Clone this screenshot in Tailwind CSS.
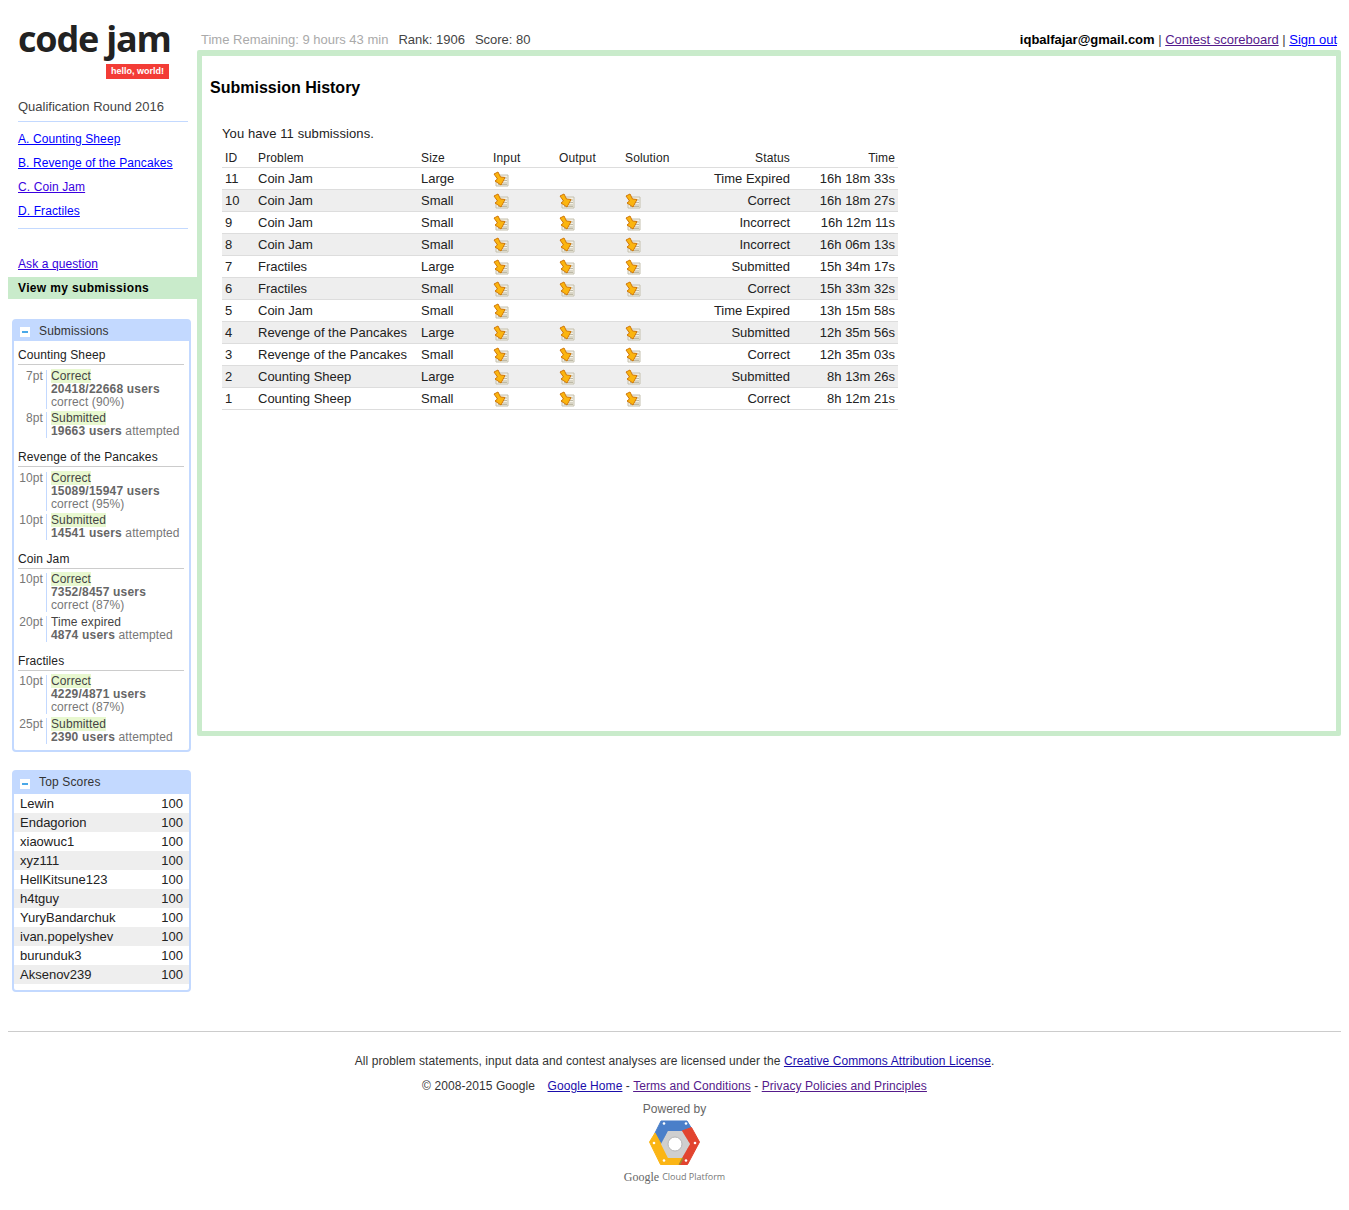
<!DOCTYPE html>
<html lang="en">
<head>
    <meta charset="UTF-8">
    <title>Code Jam - Submission History</title>
    <script src="https://cdn.jsdelivr.net/npm/@tailwindcss/browser@4"></script>
</head>
<body class="bg-white text-black font-['Liberation_Sans',Arial,sans-serif]">
    <svg class="hidden">
        <symbol id="dl" viewBox="0 0 16 16">
            <path d="M7 4h8v11H3V10z" fill="#f4f1e6" stroke="#c4c0ae" stroke-width="1"/>
            <path d="M9 7h5M10 9.500h4M10 12h4M5 13.500h9" stroke="#bdb9a6" stroke-width="1"/>
            <path d="M1 3l4-2 2.500 5 4.500.5-4 7.500-6-4 2.500-2z" fill="#fbb50f" stroke="#d0780a" stroke-width="1" stroke-linejoin="round"/>
        </symbol>
    </svg>

    <div class="flex px-2 h-[1031px]">
        <!-- Sidebar -->
        <div class="w-[189px] shrink-0">
            <div class="pl-[10px] pr-[9px]">
                <div class="h-[64px] pt-[16px] font-['Open_Sans',sans-serif] font-bold text-[36px] leading-[46px] text-[#222] whitespace-nowrap tracking-[-1.2px]">code jam</div>
                <div class="flex justify-end pr-[19px]"><span class="bg-[#f33c36] text-white text-[9px] font-bold h-[15px] leading-[15px] w-[63px] text-center">hello, world!</span></div>
                <div class="mt-[20px] text-[13px] leading-[16px] text-[#444] pb-[6px] border-b border-[#c3d9ff]">Qualification Round 2016</div>
                <div class="pt-[5px] pb-[5px] border-b border-[#c3d9ff] text-[12px] leading-[24px] tracking-[0.1px]">
                    <div><a href="#" class="underline text-[#00f]">A. Counting Sheep</a></div>
                    <div><a href="#" class="underline text-[#00f]">B. Revenge of the Pancakes</a></div>
                    <div><a href="#" class="underline text-[#3a00e0]">C. Coin Jam</a></div>
                    <div><a href="#" class="underline text-[#00f]">D. Fractiles</a></div>
                </div>
                <div class="mt-[26px] text-[12px] leading-[18px] tracking-[0.1px]"><a href="#" class="underline text-[#3300dd]">Ask a question</a></div>
            </div>
            <div class="mt-[4px] h-[22px] bg-[#c9ebcb] pl-[10px] text-[12px] leading-[22px] font-bold tracking-[0.35px]">View my submissions</div>

            <!-- Submissions box -->
            <div class="mt-[20px] ml-[4px] w-[179px] h-[433px] border-2 border-[#c3d9ff] rounded-[4px]">
                <div class="h-[21px] -mt-px bg-[#c3d9ff] flex items-center pl-[6px] text-[12px] text-[#333] tracking-[0.15px]">
                    <span class="w-[10px] h-[10px] mt-[3px] bg-white flex items-center justify-center"><span class="w-[6px] h-[2px] bg-[#4aa8e8]"></span></span>
                    <span class="ml-[9px]">Submissions</span>
                </div>
                <div class="px-[4px] pt-[2px] text-[12px] leading-[13px] text-[#777] tracking-[0.1px]">
                    <div class="h-[102px] w-[166px]">
                        <div class="h-[22px] pt-[5px] leading-[14px] text-[#222] border-b border-[#ccc]">Counting Sheep</div>
                        <div class="flex mt-[5px]">
                            <div class="w-[29px] pr-[3px] text-right border-r border-[#c3d9ff]">7pt</div>
                            <div class="pl-[4px]"><span class="bg-[#e8f8d0] text-[#444]">Correct</span><br><b class="text-[#666] tracking-[0.2px]">20418/22668 users</b><br>correct (90%)</div>
                        </div>
                        <div class="flex mt-[3px]">
                            <div class="w-[29px] pr-[3px] text-right border-r border-[#c3d9ff]">8pt</div>
                            <div class="pl-[4px] whitespace-nowrap"><span class="bg-[#e8f8d0] text-[#444]">Submitted</span><br><b class="text-[#666] tracking-[0.2px]">19663 users</b> attempted</div>
                        </div>
                    </div>
                    <div class="h-[102px] w-[166px]">
                        <div class="h-[22px] pt-[5px] leading-[14px] text-[#222] border-b border-[#ccc]">Revenge of the Pancakes</div>
                        <div class="flex mt-[5px]">
                            <div class="w-[29px] pr-[3px] text-right border-r border-[#c3d9ff]">10pt</div>
                            <div class="pl-[4px]"><span class="bg-[#e8f8d0] text-[#444]">Correct</span><br><b class="text-[#666] tracking-[0.2px]">15089/15947 users</b><br>correct (95%)</div>
                        </div>
                        <div class="flex mt-[3px]">
                            <div class="w-[29px] pr-[3px] text-right border-r border-[#c3d9ff]">10pt</div>
                            <div class="pl-[4px] whitespace-nowrap"><span class="bg-[#e8f8d0] text-[#444]">Submitted</span><br><b class="text-[#666] tracking-[0.2px]">14541 users</b> attempted</div>
                        </div>
                    </div>
                    <div class="h-[102px] w-[166px]">
                        <div class="h-[22px] pt-[5px] leading-[14px] text-[#222] border-b border-[#ccc]">Coin Jam</div>
                        <div class="flex mt-[4px]">
                            <div class="w-[29px] pr-[3px] text-right border-r border-[#c3d9ff]">10pt</div>
                            <div class="pl-[4px]"><span class="bg-[#e8f8d0] text-[#444]">Correct</span><br><b class="text-[#666] tracking-[0.2px]">7352/8457 users</b><br>correct (87%)</div>
                        </div>
                        <div class="flex mt-[4px]">
                            <div class="w-[29px] pr-[3px] text-right border-r border-[#c3d9ff]">20pt</div>
                            <div class="pl-[4px] whitespace-nowrap"><span class="text-[#444]">Time expired</span><br><b class="text-[#666] tracking-[0.2px]">4874 users</b> attempted</div>
                        </div>
                    </div>
                    <div class="w-[166px]">
                        <div class="h-[22px] pt-[5px] leading-[14px] text-[#222] border-b border-[#ccc]">Fractiles</div>
                        <div class="flex mt-[4px]">
                            <div class="w-[29px] pr-[3px] text-right border-r border-[#c3d9ff]">10pt</div>
                            <div class="pl-[4px]"><span class="bg-[#e8f8d0] text-[#444]">Correct</span><br><b class="text-[#666] tracking-[0.2px]">4229/4871 users</b><br>correct (87%)</div>
                        </div>
                        <div class="flex mt-[4px]">
                            <div class="w-[29px] pr-[3px] text-right border-r border-[#c3d9ff]">25pt</div>
                            <div class="pl-[4px] whitespace-nowrap"><span class="bg-[#e8f8d0] text-[#444]">Submitted</span><br><b class="text-[#666] tracking-[0.2px]">2390 users</b> attempted</div>
                        </div>
                    </div>
                </div>
            </div>

            <!-- Top scores box -->
            <div class="mt-[18px] ml-[4px] w-[179px] h-[222px] border-2 border-[#c3d9ff] rounded-[4px]">
                <div class="h-[23px] pb-[2px] -mt-px bg-[#c3d9ff] flex items-center pl-[6px] text-[12px] text-[#333] tracking-[0.15px]">
                    <span class="w-[10px] h-[10px] mt-[4px] bg-white flex items-center justify-center"><span class="w-[6px] h-[2px] bg-[#4aa8e8]"></span></span>
                    <span class="ml-[9px]">Top Scores</span>
                </div>
                <div class="text-[13px] leading-[19px] text-[#222]">
                    <div class="flex justify-between pl-[6px] pr-[6px]"><span>Lewin</span><span>100</span></div>
                    <div class="flex justify-between pl-[6px] pr-[6px] bg-[#eee]"><span>Endagorion</span><span>100</span></div>
                    <div class="flex justify-between pl-[6px] pr-[6px]"><span>xiaowuc1</span><span>100</span></div>
                    <div class="flex justify-between pl-[6px] pr-[6px] bg-[#eee]"><span>xyz111</span><span>100</span></div>
                    <div class="flex justify-between pl-[6px] pr-[6px]"><span>HellKitsune123</span><span>100</span></div>
                    <div class="flex justify-between pl-[6px] pr-[6px] bg-[#eee]"><span>h4tguy</span><span>100</span></div>
                    <div class="flex justify-between pl-[6px] pr-[6px]"><span>YuryBandarchuk</span><span>100</span></div>
                    <div class="flex justify-between pl-[6px] pr-[6px] bg-[#eee]"><span>ivan.popelyshev</span><span>100</span></div>
                    <div class="flex justify-between pl-[6px] pr-[6px]"><span>burunduk3</span><span>100</span></div>
                    <div class="flex justify-between pl-[6px] pr-[6px] bg-[#eee]"><span>Aksenov239</span><span>100</span></div>
                </div>
            </div>
        </div>

        <!-- Main column -->
        <div class="flex-1 min-w-0">
            <div class="h-[50px] flex items-end justify-between pl-[4px] pr-[4px] pb-[2px] text-[13px] leading-[16px]">
                <div class="flex text-[#444]">
                    <span class="text-[#aaa]">Time Remaining: 9 hours 43 min</span>
                    <span class="ml-[10px]">Rank: 1906</span>
                    <span class="ml-[10px]">Score: 80</span>
                </div>
                <div class="text-[#444]"><b class="text-black">iqbalfajar@gmail.com</b> | <a href="#" class="underline text-[#551a8b]">Contest scoreboard</a> | <a href="#" class="underline text-[#00f]">Sign out</a></div>
            </div>
            <div class="h-[686px] border-[5px] border-t-[6px] border-[#c9ebcb] rounded-[2px] pl-[8px]">
                <h1 class="mt-[22px] text-[16px] leading-[20px] font-bold">Submission History</h1>
                <div class="ml-[12px] mt-[28px] w-[676px]">
                    <p class="text-[13px] leading-[16px] text-[#222] tracking-[0.1px]">You have 11 submissions.</p>
                    <table class="mt-[3px] w-[676px] table-fixed border-collapse text-[13px] text-[#222]">
                        <colgroup>
                            <col class="w-[33px]"><col class="w-[163px]"><col class="w-[72px]"><col class="w-[66px]"><col class="w-[66px]"><col class="w-[66px]"><col class="w-[105px]"><col class="w-[105px]">
                        </colgroup>
                        <thead class="text-[12px] tracking-[0.15px]">
                            <tr class="h-[22px] border-b border-[#ddd]">
                                <th class="px-[3px] pt-[4px] pb-0 text-left font-normal">ID</th><th class="px-[3px] pt-[4px] pb-0 text-left font-normal">Problem</th><th class="px-[3px] pt-[4px] pb-0 text-left font-normal">Size</th><th class="px-[3px] pt-[4px] pb-0 text-left font-normal">Input</th><th class="px-[3px] pt-[4px] pb-0 text-left font-normal">Output</th><th class="px-[3px] pt-[4px] pb-0 text-left font-normal">Solution</th><th class="px-[3px] pt-[4px] pb-0 text-right font-normal">Status</th><th class="px-[3px] pt-[4px] pb-0 text-right font-normal">Time</th>
                            </tr>
                        </thead>
                        <tbody>
                            <tr class="h-[22px] border-b border-[#ddd]"><td class="px-[3px]">11</td><td class="px-[3px]">Coin Jam</td><td class="px-[3px]">Large</td><td class="px-[3px]"><svg class="w-4 h-4"><use href="#dl"/></svg></td><td class="px-[3px]"></td><td class="px-[3px]"></td><td class="px-[3px] text-right">Time Expired</td><td class="px-[3px] text-right">16h 18m 33s</td></tr>
                            <tr class="h-[22px] border-b border-[#ddd] bg-[#eee]"><td class="px-[3px]">10</td><td class="px-[3px]">Coin Jam</td><td class="px-[3px]">Small</td><td class="px-[3px]"><svg class="w-4 h-4"><use href="#dl"/></svg></td><td class="px-[3px]"><svg class="w-4 h-4"><use href="#dl"/></svg></td><td class="px-[3px]"><svg class="w-4 h-4"><use href="#dl"/></svg></td><td class="px-[3px] text-right">Correct</td><td class="px-[3px] text-right">16h 18m 27s</td></tr>
                            <tr class="h-[22px] border-b border-[#ddd]"><td class="px-[3px]">9</td><td class="px-[3px]">Coin Jam</td><td class="px-[3px]">Small</td><td class="px-[3px]"><svg class="w-4 h-4"><use href="#dl"/></svg></td><td class="px-[3px]"><svg class="w-4 h-4"><use href="#dl"/></svg></td><td class="px-[3px]"><svg class="w-4 h-4"><use href="#dl"/></svg></td><td class="px-[3px] text-right">Incorrect</td><td class="px-[3px] text-right">16h 12m 11s</td></tr>
                            <tr class="h-[22px] border-b border-[#ddd] bg-[#eee]"><td class="px-[3px]">8</td><td class="px-[3px]">Coin Jam</td><td class="px-[3px]">Small</td><td class="px-[3px]"><svg class="w-4 h-4"><use href="#dl"/></svg></td><td class="px-[3px]"><svg class="w-4 h-4"><use href="#dl"/></svg></td><td class="px-[3px]"><svg class="w-4 h-4"><use href="#dl"/></svg></td><td class="px-[3px] text-right">Incorrect</td><td class="px-[3px] text-right">16h 06m 13s</td></tr>
                            <tr class="h-[22px] border-b border-[#ddd]"><td class="px-[3px]">7</td><td class="px-[3px]">Fractiles</td><td class="px-[3px]">Large</td><td class="px-[3px]"><svg class="w-4 h-4"><use href="#dl"/></svg></td><td class="px-[3px]"><svg class="w-4 h-4"><use href="#dl"/></svg></td><td class="px-[3px]"><svg class="w-4 h-4"><use href="#dl"/></svg></td><td class="px-[3px] text-right">Submitted</td><td class="px-[3px] text-right">15h 34m 17s</td></tr>
                            <tr class="h-[22px] border-b border-[#ddd] bg-[#eee]"><td class="px-[3px]">6</td><td class="px-[3px]">Fractiles</td><td class="px-[3px]">Small</td><td class="px-[3px]"><svg class="w-4 h-4"><use href="#dl"/></svg></td><td class="px-[3px]"><svg class="w-4 h-4"><use href="#dl"/></svg></td><td class="px-[3px]"><svg class="w-4 h-4"><use href="#dl"/></svg></td><td class="px-[3px] text-right">Correct</td><td class="px-[3px] text-right">15h 33m 32s</td></tr>
                            <tr class="h-[22px] border-b border-[#ddd]"><td class="px-[3px]">5</td><td class="px-[3px]">Coin Jam</td><td class="px-[3px]">Small</td><td class="px-[3px]"><svg class="w-4 h-4"><use href="#dl"/></svg></td><td class="px-[3px]"></td><td class="px-[3px]"></td><td class="px-[3px] text-right">Time Expired</td><td class="px-[3px] text-right">13h 15m 58s</td></tr>
                            <tr class="h-[22px] border-b border-[#ddd] bg-[#eee]"><td class="px-[3px]">4</td><td class="px-[3px] whitespace-nowrap">Revenge of the Pancakes</td><td class="px-[3px]">Large</td><td class="px-[3px]"><svg class="w-4 h-4"><use href="#dl"/></svg></td><td class="px-[3px]"><svg class="w-4 h-4"><use href="#dl"/></svg></td><td class="px-[3px]"><svg class="w-4 h-4"><use href="#dl"/></svg></td><td class="px-[3px] text-right">Submitted</td><td class="px-[3px] text-right">12h 35m 56s</td></tr>
                            <tr class="h-[22px] border-b border-[#ddd]"><td class="px-[3px]">3</td><td class="px-[3px] whitespace-nowrap">Revenge of the Pancakes</td><td class="px-[3px]">Small</td><td class="px-[3px]"><svg class="w-4 h-4"><use href="#dl"/></svg></td><td class="px-[3px]"><svg class="w-4 h-4"><use href="#dl"/></svg></td><td class="px-[3px]"><svg class="w-4 h-4"><use href="#dl"/></svg></td><td class="px-[3px] text-right">Correct</td><td class="px-[3px] text-right">12h 35m 03s</td></tr>
                            <tr class="h-[22px] border-b border-[#ddd] bg-[#eee]"><td class="px-[3px]">2</td><td class="px-[3px]">Counting Sheep</td><td class="px-[3px]">Large</td><td class="px-[3px]"><svg class="w-4 h-4"><use href="#dl"/></svg></td><td class="px-[3px]"><svg class="w-4 h-4"><use href="#dl"/></svg></td><td class="px-[3px]"><svg class="w-4 h-4"><use href="#dl"/></svg></td><td class="px-[3px] text-right">Submitted</td><td class="px-[3px] text-right">8h 13m 26s</td></tr>
                            <tr class="h-[22px] border-b border-[#ddd]"><td class="px-[3px]">1</td><td class="px-[3px]">Counting Sheep</td><td class="px-[3px]">Small</td><td class="px-[3px]"><svg class="w-4 h-4"><use href="#dl"/></svg></td><td class="px-[3px]"><svg class="w-4 h-4"><use href="#dl"/></svg></td><td class="px-[3px]"><svg class="w-4 h-4"><use href="#dl"/></svg></td><td class="px-[3px] text-right">Correct</td><td class="px-[3px] text-right">8h 12m 21s</td></tr>
                        </tbody>
                    </table>
                </div>
            </div>
        </div>
    </div>

    <!-- Footer -->
    <div class="mx-2 border-t border-[#ccc] text-center text-[12px] text-[#333] tracking-[0.08px]">
        <p class="mt-[21px] leading-[16px]">All problem statements, input data and contest analyses are licensed under the <a href="#" class="underline text-[#1a0dab]">Creative Commons Attribution License</a>.</p>
        <p class="mt-[9px] leading-[16px]">© 2008-2015 Google <a href="#" class="ml-[9px] underline text-[#1a0dab]">Google Home</a> - <a href="#" class="underline text-[#551a8b]">Terms and Conditions</a> - <a href="#" class="underline text-[#551a8b]">Privacy Policies and Principles</a></p>
        <p class="mt-[8px] text-[12px] leading-[14px] text-[#666] tracking-normal">Powered by</p>
        <div class="flex justify-center mt-[4px]">
            <svg width="52" height="46" viewBox="4 5 52 46">
                <path d="M16 6h26l4 6.500-9 3.500H23l-7 13-6-11z" fill="#4a7fc9" stroke="#4a7fc9" stroke-linejoin="round"/>
                <path d="M46.500 12.500L54.500 27 42.500 49.500H34l3-6.500 8-14-8-13z" fill="#e2442f" stroke="#e2442f" stroke-linejoin="round"/>
                <path d="M10 18l6 11 7 14h14l-3 6.500H15.500L4.500 27z" fill="#fbb515" stroke="#fbb515" stroke-linejoin="round"/>
                <path d="M37 43l-3.500 6.500h2L39 43z" fill="#a8862a"/>
                <path d="M23 16h14l8 13-8 14H23l-7-14z" fill="#cfcfcf"/>
                <circle cx="30" cy="29" r="7" fill="#fff" stroke="#b5b5b5" stroke-width="1"/>
                <g fill="#fff"><circle cx="19" cy="8.500" r="1.300"/><circle cx="41" cy="8.500" r="1.300"/><circle cx="50" cy="28" r="1.300"/><circle cx="41" cy="45.500" r="1.300"/><circle cx="19" cy="45.500" r="1.300"/><circle cx="9" cy="28" r="1.300"/></g>
            </svg>
        </div>
        <div class="mt-[2px] h-[18px] flex justify-center items-center text-[#777] tracking-normal">
            <span class="font-['Liberation_Serif',serif] text-[12px] text-[#666]">Google</span>
            <span class="ml-[3px] font-['Open_Sans',sans-serif] text-[9px]">Cloud Platform</span>
        </div>
    </div>
</body>
</html>
